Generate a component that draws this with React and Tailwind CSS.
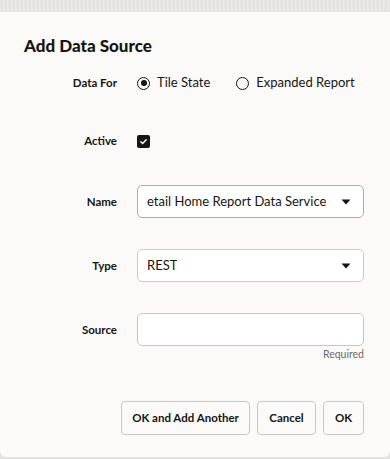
import React from 'react';

const font = { fontFamily: 'Lato, "Noto Sans", Arial, sans-serif' };

function Label({ children }) {
  return (
    <div className="w-[117px] shrink-0 text-right text-[11.5px] font-bold text-[#161513]">
      {children}
    </div>
  );
}

function Radio({ checked }) {
  return (
    <span className="flex h-[13px] w-[13px] items-center justify-center rounded-full border-[1.5px] border-[#161513]">
      {checked && <span className="h-[6px] w-[6px] rounded-full bg-[#161513]" />}
    </span>
  );
}

function Caret() {
  return (
    <svg width="10" height="6" viewBox="0 0 10 6" className="shrink-0">
      <path d="M0.5 0.5h9L5 5.5z" fill="#161513" />
    </svg>
  );
}

function Select({ value, borderClass }) {
  return (
    <div
      className={`flex h-[33px] w-[227px] items-center justify-between gap-[8px] rounded-[5px] border bg-white pl-[9px] pr-[12px] ${borderClass}`}
    >
      <span className="overflow-hidden whitespace-nowrap text-[13px] text-[#161513]">{value}</span>
      <Caret />
    </div>
  );
}

function Button({ children, className }) {
  return (
    <button
      type="button"
      className={`h-[34px] whitespace-nowrap rounded-[4px] border border-[#cbc7c3] bg-[#fcfaf9] text-[11.5px] font-bold text-[#161513] ${className}`}
    >
      {children}
    </button>
  );
}

export default function App() {
  return (
    <div className="h-[459px] w-[390px] overflow-hidden bg-[#e4e2df]" style={font}>
      <div className="h-[12px] bg-[repeating-linear-gradient(90deg,#eceae8_0px,#e2dfdc_2px,#efedeb_4px)]" />
      <div className="flex h-[445px] flex-col rounded-b-[6px] bg-[#fcfaf9]">
        <h1 className="pl-[24px] pt-[22px] text-[17px] font-black leading-[24px] text-[#161513]">
          Add Data Source
        </h1>

        <div className="mt-[13px] flex h-[24px] items-center gap-[20px]">
          <Label>Data For</Label>
          <div className="flex items-center text-[13px] text-[#161513]">
            <Radio checked />
            <span className="ml-[7px]">Tile State</span>
            <span className="ml-[26px]">
              <Radio />
            </span>
            <span className="ml-[7px]">Expanded Report</span>
          </div>
        </div>

        <div className="mt-[34px] flex h-[24px] items-center gap-[20px]">
          <Label>Active</Label>
          <span className="flex h-[13px] w-[13px] items-center justify-center rounded-[2px] bg-[#161513]">
            <svg width="9" height="9" viewBox="0 0 10 10">
              <path d="M2 5.2l2 2L8 3" fill="none" stroke="#fff" strokeWidth="1.6" strokeLinecap="round" strokeLinejoin="round" />
            </svg>
          </span>
        </div>

        <div className="mt-[32px] flex items-center gap-[20px]">
          <Label>Name</Label>
          <Select value="etail Home Report Data Service" borderClass="border-[#a9b39f]" />
        </div>

        <div className="mt-[31px] flex items-center gap-[20px]">
          <Label>Type</Label>
          <Select value="REST" borderClass="border-[#cdc9c5]" />
        </div>

        <div className="mt-[31px] flex items-center gap-[20px]">
          <Label>Source</Label>
          <div className="h-[33px] w-[227px] rounded-[5px] border border-[#c9c5c1] bg-white" />
        </div>
        <div className="mt-[1px] w-[364px] text-right text-[10.5px] leading-[14px] text-[#6f6b67]">
          Required
        </div>

        <div className="mt-[40px] flex w-[364px] justify-end gap-[7px]">
          <Button className="w-[129px]">OK and Add Another</Button>
          <Button className="w-[59px]">Cancel</Button>
          <Button className="w-[41px]">OK</Button>
        </div>
      </div>
    </div>
  );
}
